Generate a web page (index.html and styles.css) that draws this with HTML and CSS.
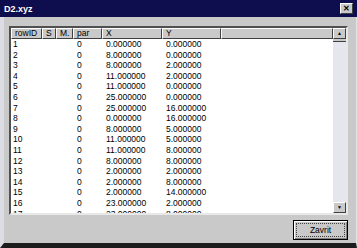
FILE: index.html
```html
<!DOCTYPE html>
<html>
<head>
  <title>D2.xyz</title>
  <link rel="stylesheet" href="styles.css">
</head>
<body>
  <div class="window">
    <div class="titlebar">
      <span class="title">D2.xyz</span>
      <span class="close">&#x2715;</span>
    </div>
    <div class="content">
      <div class="listbox">
        <div class="list">
          <div class="row head">
            <span>rowID</span><span>S</span><span>M.</span><span>par</span><span>X</span><span>Y</span><span></span>
          </div>
          <div class="rows" id="rows"></div>
        </div>
        <div class="scrollbar">
          <span class="arrow">&#9650;</span>
          <span class="thumb"></span>
          <span class="track"></span>
          <span class="arrow">&#9660;</span>
        </div>
      </div>
      <div class="buttons">
        <button class="btn"><span class="focus">Zavrit</span></button>
      </div>
    </div>
  </div>
  <script>
    var data = [
      [0, 0], [8, 0], [8, 2], [11, 2], [11, 0], [25, 0], [25, 16], [0, 16], [8, 5],
      [11, 5], [11, 8], [8, 8], [2, 2], [2, 8], [2, 14], [23, 2], [23, 8]
    ];
    var rows = document.getElementById('rows');
    data.forEach(function (d, i) {
      var row = document.createElement('div');
      row.className = 'row';
      row.innerHTML = '<span>' + (i + 1) + '</span><span></span><span></span><span>0</span>' +
        '<span>' + d[0].toFixed(6) + '</span><span>' + d[1].toFixed(6) + '</span><span></span>';
      rows.appendChild(row);
    });
  </script>
</body>
</html>
```

FILE: styles.css
```css
html, body {
  margin: 0;
  width: 357px;
  height: 248px;
  overflow: hidden;
  font-family: "Liberation Sans", Arial, sans-serif;
  font-size: 8.5px;
  color: #000;
}
.window {
  width: 357px;
  height: 248px;
  box-sizing: border-box;
  background: #c9c9c9;
  border-left: 4px solid #dcdce4;
  border-right: 1px solid #e4e4e8;
  border-bottom: 5px solid #1c1c1c;
  display: flex;
  flex-direction: column;
}
.titlebar {
  height: 17px;
  margin-left: -4px;
  margin-right: -1px;
  background: #0e0e4e;
  display: flex;
  align-items: center;
  justify-content: space-between;
  padding: 0 4px;
  flex: 0 0 auto;
}
.title {
  color: #fff;
  font-weight: bold;
  font-size: 9px;
}
.close {
  width: 11px;
  height: 9px;
  background: #c9c9c9;
  border-top: 1px solid #fff;
  border-left: 1px solid #fff;
  border-right: 1px solid #404040;
  border-bottom: 1px solid #404040;
  font-size: 8px;
  font-weight: bold;
  line-height: 9px;
  text-align: center;
}
.content {
  flex: 1 1 auto;
  display: flex;
  flex-direction: column;
  padding: 9px 8px 0 5px;
}
.listbox {
  height: 189px;
  box-sizing: border-box;
  background: #fff;
  border-top: 2px solid #505050;
  border-left: 2px solid #505050;
  border-right: 2px solid #e8e8e8;
  border-bottom: 2px solid #e8e8e8;
  display: flex;
  overflow: hidden;
}
.list {
  flex: 1 1 auto;
  overflow: hidden;
}
.row {
  display: grid;
  grid-template-columns: 31px 14px 17px 29px 60px 59px 1fr;
  height: 10.6px;
  line-height: 10.6px;
  white-space: nowrap;
}
.row span {
  padding-left: 4px;
}
.row span:first-child {
  padding-left: 2px;
}
.row.head {
  height: 11px;
  line-height: 9px;
}
.row.head span {
  background: #c9c9c9;
  border-top: 1px solid #fff;
  border-left: 1px solid #fff;
  border-right: 1px solid #404040;
  border-bottom: 1px solid #404040;
  padding-left: 3px;
}
.scrollbar {
  width: 13px;
  flex: 0 0 auto;
  display: flex;
  flex-direction: column;
  background: #e6e6ee;
}
.arrow {
  height: 9px;
  background: #c9c9c9;
  border-top: 1px solid #fff;
  border-left: 1px solid #fff;
  border-right: 1px solid #404040;
  border-bottom: 1px solid #404040;
  font-size: 5px;
  line-height: 9px;
  text-align: center;
}
.thumb {
  height: 2px;
  background: #c9c9c9;
  border-bottom: 1px solid #404040;
}
.track {
  flex: 1 1 auto;
}
.buttons {
  display: flex;
  justify-content: flex-end;
  padding-top: 5px;
}
.btn {
  width: 55px;
  height: 20px;
  margin: 0;
  padding: 2px;
  background: #c9c9c9;
  border: 1px solid #000;
  box-shadow: inset 1px 1px 0 #fff, inset -1px -1px 0 #808080;
  font-family: inherit;
  font-size: 8.5px;
  display: flex;
}
.focus {
  flex: 1 1 auto;
  border: 1px dotted #404040;
  line-height: 12px;
  text-align: center;
}
```
